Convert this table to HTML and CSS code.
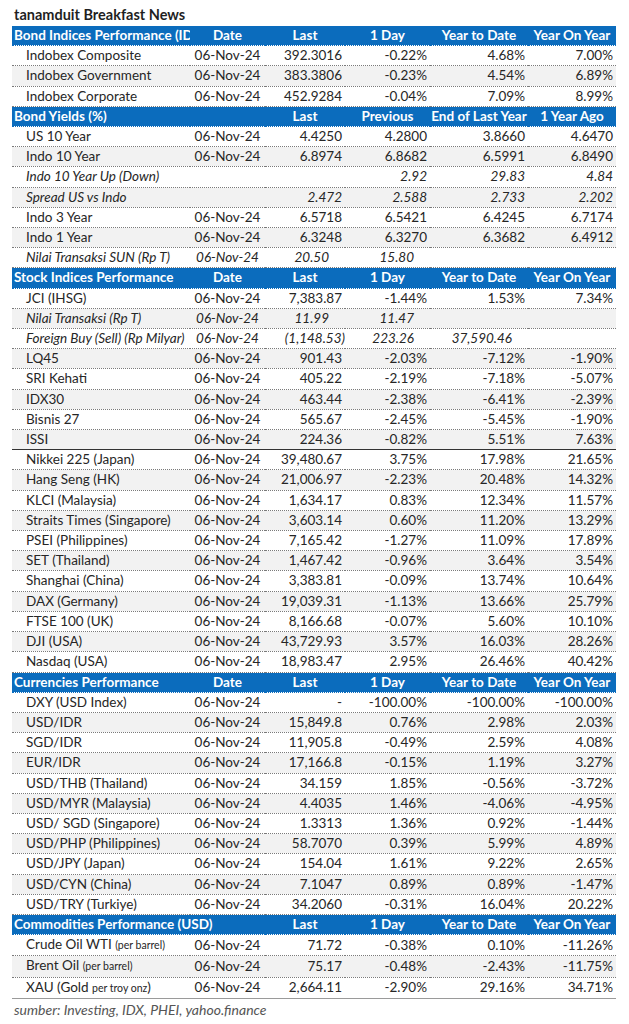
FILE: index.html
```html
<!DOCTYPE html>
<html lang="id">
<head>
  <meta charset="UTF-8" />
  <meta name="viewport" content="width=device-width, initial-scale=1.0"/>
  <title>tanamduit Breakfast News</title>
  <link rel="stylesheet" href="styles.css">
</head>
<body>
  <div class="sheet">
    <h1 class="title">tanamduit Breakfast News</h1>

    <table class="market">
      <colgroup>
        <col class="c-name">
        <col class="c-date">
        <col class="c-last">
        <col class="c-day">
        <col class="c-ytd">
        <col class="c-yoy">
      </colgroup>

      <!-- Bond Indices -->
      <tr class="head">
        <th class="name">Bond Indices Performance (IDR)</th>
        <th>Date</th><th>Last</th><th>1 Day</th><th>Year to Date</th><th>Year On Year</th>
      </tr>
      <tr><td class="name">Indobex Composite</td><td class="date">06-Nov-24</td><td>392.3016</td><td>-0.22%</td><td>4.68%</td><td>7.00%</td></tr>
      <tr class="alt"><td class="name">Indobex Government</td><td class="date">06-Nov-24</td><td>383.3806</td><td>-0.23%</td><td>4.54%</td><td>6.89%</td></tr>
      <tr><td class="name">Indobex Corporate</td><td class="date">06-Nov-24</td><td>452.9284</td><td>-0.04%</td><td>7.09%</td><td>8.99%</td></tr>

      <!-- Bond Yields -->
      <tr class="head">
        <th class="name">Bond Yields (%)</th>
        <th></th><th>Last</th><th>Previous</th><th>End of Last Year</th><th>1 Year Ago</th>
      </tr>
      <tr><td class="name">US 10 Year</td><td class="date">06-Nov-24</td><td>4.4250</td><td>4.2800</td><td>3.8660</td><td>4.6470</td></tr>
      <tr class="alt"><td class="name">Indo 10 Year</td><td class="date">06-Nov-24</td><td>6.8974</td><td>6.8682</td><td>6.5991</td><td>6.8490</td></tr>
      <tr class="note"><td class="name">Indo 10 Year Up (Down)</td><td class="date"></td><td></td><td>2.92</td><td>29.83</td><td>4.84</td></tr>
      <tr class="note alt"><td class="name">Spread US vs Indo</td><td class="date"></td><td>2.472</td><td>2.588</td><td>2.733</td><td>2.202</td></tr>
      <tr><td class="name">Indo 3 Year</td><td class="date">06-Nov-24</td><td>6.5718</td><td>6.5421</td><td>6.4245</td><td>6.7174</td></tr>
      <tr class="alt"><td class="name">Indo 1 Year</td><td class="date">06-Nov-24</td><td>6.3248</td><td>6.3270</td><td>6.3682</td><td>6.4912</td></tr>
      <tr class="note pad"><td class="name">Nilai Transaksi SUN (Rp T)</td><td class="date">06-Nov-24</td><td>20.50</td><td>15.80</td><td></td><td></td></tr>

      <!-- Stock Indices -->
      <tr class="head">
        <th class="name">Stock Indices Performance</th>
        <th>Date</th><th>Last</th><th>1 Day</th><th>Year to Date</th><th>Year On Year</th>
      </tr>
      <tr><td class="name">JCI (IHSG)</td><td class="date">06-Nov-24</td><td>7,383.87</td><td>-1.44%</td><td>1.53%</td><td>7.34%</td></tr>
      <tr class="note pad alt"><td class="name">Nilai Transaksi (Rp T)</td><td class="date">06-Nov-24</td><td>11.99</td><td>11.47</td><td></td><td></td></tr>
      <tr class="note pad"><td class="name">Foreign Buy (Sell) (Rp Milyar)</td><td class="date">06-Nov-24</td><td class="paren">(1,148.53)</td><td>223.26</td><td>37,590.46</td><td></td></tr>
      <tr class="alt"><td class="name">LQ45</td><td class="date">06-Nov-24</td><td>901.43</td><td>-2.03%</td><td>-7.12%</td><td>-1.90%</td></tr>
      <tr><td class="name">SRI Kehati</td><td class="date">06-Nov-24</td><td>405.22</td><td>-2.19%</td><td>-7.18%</td><td>-5.07%</td></tr>
      <tr class="alt"><td class="name">IDX30</td><td class="date">06-Nov-24</td><td>463.44</td><td>-2.38%</td><td>-6.41%</td><td>-2.39%</td></tr>
      <tr><td class="name">Bisnis 27</td><td class="date">06-Nov-24</td><td>565.67</td><td>-2.45%</td><td>-5.45%</td><td>-1.90%</td></tr>
      <tr class="alt split"><td class="name">ISSI</td><td class="date">06-Nov-24</td><td>224.36</td><td>-0.82%</td><td>5.51%</td><td>7.63%</td></tr>
      <tr><td class="name">Nikkei 225 (Japan)</td><td class="date">06-Nov-24</td><td>39,480.67</td><td>3.75%</td><td>17.98%</td><td>21.65%</td></tr>
      <tr class="alt"><td class="name">Hang Seng (HK)</td><td class="date">06-Nov-24</td><td>21,006.97</td><td>-2.23%</td><td>20.48%</td><td>14.32%</td></tr>
      <tr><td class="name">KLCI (Malaysia)</td><td class="date">06-Nov-24</td><td>1,634.17</td><td>0.83%</td><td>12.34%</td><td>11.57%</td></tr>
      <tr class="alt"><td class="name">Straits Times (Singapore)</td><td class="date">06-Nov-24</td><td>3,603.14</td><td>0.60%</td><td>11.20%</td><td>13.29%</td></tr>
      <tr><td class="name">PSEI (Philippines)</td><td class="date">06-Nov-24</td><td>7,165.42</td><td>-1.27%</td><td>11.09%</td><td>17.89%</td></tr>
      <tr class="alt"><td class="name">SET (Thailand)</td><td class="date">06-Nov-24</td><td>1,467.42</td><td>-0.96%</td><td>3.64%</td><td>3.54%</td></tr>
      <tr><td class="name">Shanghai (China)</td><td class="date">06-Nov-24</td><td>3,383.81</td><td>-0.09%</td><td>13.74%</td><td>10.64%</td></tr>
      <tr class="alt"><td class="name">DAX (Germany)</td><td class="date">06-Nov-24</td><td>19,039.31</td><td>-1.13%</td><td>13.66%</td><td>25.79%</td></tr>
      <tr><td class="name">FTSE 100 (UK)</td><td class="date">06-Nov-24</td><td>8,166.68</td><td>-0.07%</td><td>5.60%</td><td>10.10%</td></tr>
      <tr class="alt"><td class="name">DJI (USA)</td><td class="date">06-Nov-24</td><td>43,729.93</td><td>3.57%</td><td>16.03%</td><td>28.26%</td></tr>
      <tr><td class="name">Nasdaq (USA)</td><td class="date">06-Nov-24</td><td>18,983.47</td><td>2.95%</td><td>26.46%</td><td>40.42%</td></tr>

      <!-- Currencies -->
      <tr class="head">
        <th class="name">Currencies Performance</th>
        <th>Date</th><th>Last</th><th>1 Day</th><th>Year to Date</th><th>Year On Year</th>
      </tr>
      <tr><td class="name">DXY (USD Index)</td><td class="date">06-Nov-24</td><td>-</td><td>-100.00%</td><td>-100.00%</td><td>-100.00%</td></tr>
      <tr class="alt"><td class="name">USD/IDR</td><td class="date">06-Nov-24</td><td>15,849.8</td><td>0.76%</td><td>2.98%</td><td>2.03%</td></tr>
      <tr><td class="name">SGD/IDR</td><td class="date">06-Nov-24</td><td>11,905.8</td><td>-0.49%</td><td>2.59%</td><td>4.08%</td></tr>
      <tr class="alt"><td class="name">EUR/IDR</td><td class="date">06-Nov-24</td><td>17,166.8</td><td>-0.15%</td><td>1.19%</td><td>3.27%</td></tr>
      <tr><td class="name">USD/THB (Thailand)</td><td class="date">06-Nov-24</td><td>34.159</td><td>1.85%</td><td>-0.56%</td><td>-3.72%</td></tr>
      <tr class="alt"><td class="name">USD/MYR (Malaysia)</td><td class="date">06-Nov-24</td><td>4.4035</td><td>1.46%</td><td>-4.06%</td><td>-4.95%</td></tr>
      <tr><td class="name">USD/ SGD (Singapore)</td><td class="date">06-Nov-24</td><td>1.3313</td><td>1.36%</td><td>0.92%</td><td>-1.44%</td></tr>
      <tr class="alt"><td class="name">USD/PHP (Philippines)</td><td class="date">06-Nov-24</td><td>58.7070</td><td>0.39%</td><td>5.99%</td><td>4.89%</td></tr>
      <tr><td class="name">USD/JPY (Japan)</td><td class="date">06-Nov-24</td><td>154.04</td><td>1.61%</td><td>9.22%</td><td>2.65%</td></tr>
      <tr class="alt"><td class="name">USD/CYN (China)</td><td class="date">06-Nov-24</td><td>7.1047</td><td>0.89%</td><td>0.89%</td><td>-1.47%</td></tr>
      <tr><td class="name">USD/TRY (Turkiye)</td><td class="date">06-Nov-24</td><td>34.2060</td><td>-0.31%</td><td>16.04%</td><td>20.22%</td></tr>

      <!-- Commodities -->
      <tr class="head">
        <th class="name" colspan="2">Commodities Performance (USD)</th>
        <th>Last</th><th>1 Day</th><th>Year to Date</th><th>Year On Year</th>
      </tr>
      <tr><td class="name">Crude Oil WTI <small>(per barrel)</small></td><td class="date">06-Nov-24</td><td>71.72</td><td>-0.38%</td><td>0.10%</td><td>-11.26%</td></tr>
      <tr class="alt"><td class="name">Brent Oil <small>(per barrel)</small></td><td class="date">06-Nov-24</td><td>75.17</td><td>-0.48%</td><td>-2.43%</td><td>-11.75%</td></tr>
      <tr class="last"><td class="name">XAU (Gold <small>per troy onz</small>)</td><td class="date">06-Nov-24</td><td>2,664.11</td><td>-2.90%</td><td>29.16%</td><td>34.71%</td></tr>
    </table>

    <p class="source">sumber: Investing, IDX, PHEI, yahoo.finance</p>
  </div>
</body>
</html>
```

FILE: styles.css
```css
body {
  margin: 0;
  background: #ffffff;
  font-family: Lato, 'Open Sans', sans-serif;
  color: #262626;
}

.sheet {
  padding: 6px 13px 0 12px;
}

.title {
  margin: 0 0 3px 2px;
  font-size: 14.5px;
  font-weight: 700;
  line-height: 17px;
  color: #1f1f1f;
}

.market {
  width: 604px;
  table-layout: fixed;
  border-collapse: collapse;
  font-size: 13.5px;
}

.c-name { width: 178px; }
.c-date { width: 75px; }
.c-last { width: 80px; }
.c-day  { width: 85px; }
.c-ytd  { width: 98px; }
.c-yoy  { width: 88px; }

.market td,
.market th {
  height: 19.2px;
  padding: 0 3px 0 0;
  line-height: 19.2px;
  white-space: nowrap;
  overflow: hidden;
}

.market td {
  text-align: right;
  border-bottom: 1px dotted #7a7a7a;
}

.market tr.alt td {
  background: #f2f2f2;
}

.market td.name {
  text-align: left;
  padding-left: 14px;
}

.market td.date {
  text-align: center;
  padding: 0;
}

.market small {
  font-size: 10.5px;
}

/* blue section bars */
.head th {
  background: #0b6cbd;
  color: #ffffff;
  font-weight: 700;
  text-align: center;
  padding: 0;
  border-bottom: 1px dotted #0b6cbd;
}

.head th.name {
  text-align: left;
  padding-left: 2px;
  text-overflow: clip;
}

.note td {
  font-style: italic;
}

.pad td {
  padding-right: 16px;
}

.pad td.paren {
  padding-right: 0;
}

.split td {
  border-bottom: 1px solid #333333;
}

.last td {
  border-bottom: 1px solid #9a9a9a;
}

.source {
  margin: 2px 0 0 2px;
  font-size: 14px;
  line-height: 17px;
  font-style: italic;
  color: #555555;
}
```
